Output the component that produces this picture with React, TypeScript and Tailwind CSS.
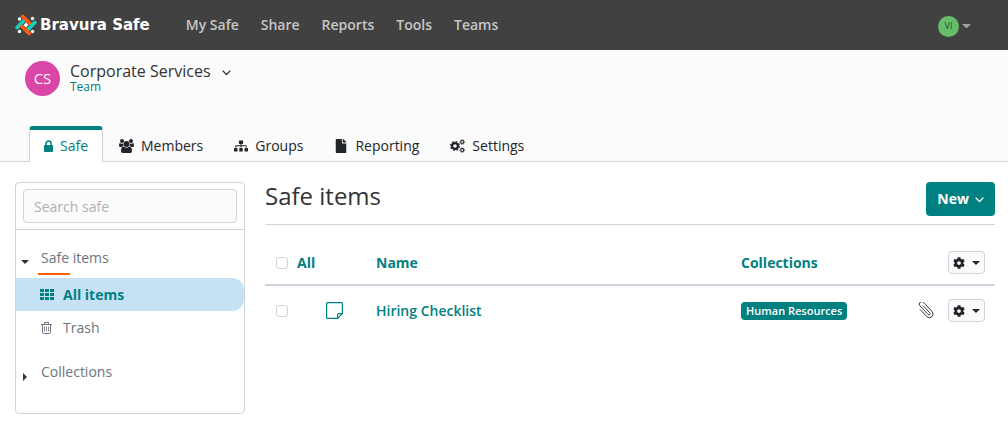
import type { ReactNode } from "react";
import { FaCog, FaFile, FaSitemap } from "react-icons/fa";

// ─── Icons ───────────────────────────────────────────────────────────────────

function Logo() {
  return (
    <svg viewBox="0 0 22 22" width={22} height={22} fill="none" strokeLinecap="round" aria-hidden="true">
      <g fill="#fff">
        <circle cx={4.500} cy={5} r={1.700} />
        <circle cx={17.500} cy={4.500} r={1.700} />
        <circle cx={4.500} cy={17.500} r={1.700} />
        <circle cx={17.500} cy={17.500} r={1.700} />
      </g>
      <g strokeWidth={3.800}>
        <path d="M2.200 13.500L9.500 6" stroke="#16cfc0" />
        <path d="M7.800 2.500l7.200 7" stroke="#fd5a12" />
        <path d="M19.800 8.500L12.500 16" stroke="#16cfc0" />
        <path d="M7 12.500l7.200 7" stroke="#fd5a12" />
      </g>
      <path d="M11 8.500l2.500 2.500-2.500 2.500L8.500 11z" fill="#fff" />
    </svg>
  );
}

function Chevron({ className }: { className?: string }) {
  return (
    <svg
      viewBox="0 0 9 6"
      width={9}
      height={6}
      fill="none"
      stroke="currentColor"
      strokeWidth={1.2}
      strokeLinecap="round"
      strokeLinejoin="round"
      className={className}
      aria-hidden="true"
    >
      <path d="M1 1l3.500 3.500L8 1" />
    </svg>
  );
}

function CaretDown({ width = 8, className }: { width?: number; className?: string }) {
  return (
    <svg viewBox="0 0 8 4" width={width} fill="currentColor" className={className} aria-hidden="true">
      <path d="M0 0h8L4 4z" />
    </svg>
  );
}

function CaretRight({ className }: { className?: string }) {
  return (
    <svg viewBox="0 0 8 8" width={8} height={8} fill="currentColor" className={className} aria-hidden="true">
      <path d="M2 0v8l4-4z" />
    </svg>
  );
}

function LockIcon() {
  return (
    <svg viewBox="0 0 9 12" width={9} height={12} aria-hidden="true">
      <path d="M2 6V3.500a2.500 2.500 0 015 0V6" fill="none" stroke="currentColor" strokeWidth={1.500} />
      <rect y={5} width={9} height={7} rx={0.7} fill="currentColor" />
    </svg>
  );
}

function UsersIcon() {
  return (
    <svg viewBox="0 0 1920 1792" width={15} height={14} fill="currentColor" aria-hidden="true">
      <path d="M593 896q-162 5-265 128H194q-82 0-138-40.500T0 865q0-353 124-353 6 0 43.500 21t97.500 42.500T384 597q67 0 133-23-5 37-5 66 0 139 81 256zm1071 637q0 120-73 189.500t-194 69.500H523q-121 0-194-69.500T256 1533q0-53 3.500-103.500t14-109T300 1212t43-97.500 62-81 85.500-53.500T602 960q10 0 43 21.500t73 48 107 48 135 21.500 135-21.500 107-48 73-48 43-21.500q61 0 111.500 20t85.500 53.500 62 81 43 97.500 26.500 108.500 14 109 3.500 103.500z" />
      <path d="M1920 865q0 78-56 118.500t-138 40.500h-134q-103-123-265-128 81-117 81-256 0-29-5-66 66 23 133 23 59 0 119-21.500t97.500-42.500 43.500-21q124 0 124 353z" />
      <circle cx={384} cy={256} r={256} />
      <circle cx={1536} cy={256} r={256} />
      <circle cx={960} cy={640} r={384} />
    </svg>
  );
}

function CogsIcon() {
  return (
    <svg viewBox="0 0 15 14" width={15} height={14} fill="none" stroke="currentColor" aria-hidden="true">
      <circle cx={5} cy={7} r={2.900} strokeWidth={2.200} />
      <circle cx={5} cy={7} r={4.300} strokeWidth={1.400} strokeDasharray="1.7 1.677" />
      <circle cx={12.200} cy={3} r={1.500} strokeWidth={1.100} />
      <circle cx={12.200} cy={3} r={2.300} strokeWidth={0.900} strokeDasharray="1 .806" />
      <circle cx={12.200} cy={11} r={1.500} strokeWidth={1.100} />
      <circle cx={12.200} cy={11} r={2.300} strokeWidth={0.900} strokeDasharray="1 .806" />
    </svg>
  );
}

function GridIcon() {
  return (
    <svg viewBox="0 0 14 11" width={14} height={11} fill="currentColor" aria-hidden="true">
      <path d="M0 0h4v3H0zM5 0h4v3H5zM10 0h4v3h-4zM0 4h4v3H0zM5 4h4v3H5zM10 4h4v3h-4zM0 8h4v3H0zM5 8h4v3H5zM10 8h4v3h-4z" />
    </svg>
  );
}

function TrashIcon() {
  return (
    <svg viewBox="0 0 11 12" width={11} height={12} fill="none" stroke="currentColor" aria-hidden="true">
      <path d="M0 2.500h11M3.500 2.500v-2h4v2M1.500 2.500v8q0 1 1 1h6q1 0 1-1v-8" />
      <path d="M3.500 4.500v5M5.500 4.500v5M7.500 4.500v5" strokeWidth={0.8} />
    </svg>
  );
}

function NoteIcon() {
  return (
    <svg
      viewBox="0 0 17 17"
      width={17}
      height={17}
      fill="none"
      stroke="currentColor"
      strokeWidth={1.2}
      strokeLinejoin="round"
      aria-hidden="true"
    >
      <path d="M1.500.6h14q.9 0 .9.9v10.200l-4.700 4.700H1.500q-.9 0-.9-.9v-14q0-.9.9-.9zM11.600 16.300v-3.700q0-1 1-1h3.700" />
    </svg>
  );
}

function PaperclipIcon() {
  return (
    <svg viewBox="0 0 16 17" width={16} height={17} fill="none" stroke="currentColor" strokeWidth={0.9} strokeLinecap="round" aria-hidden="true">
      <path
        transform="translate(7.500 8) rotate(-43)"
        d="M1.200-4.500V5a1.200 1.200 0 01-2.400 0V-6.800a2.500 2.500 0 015 0V5.500a3.700 3.700 0 01-7.400 0V-4"
      />
    </svg>
  );
}

// ─── Data ────────────────────────────────────────────────────────────────────

const navLinks = ["My Safe", "Share", "Reports", "Tools", "Teams"];

const tabs: { label: string; icon: ReactNode; active?: boolean }[] = [
  { label: "Safe", icon: <LockIcon />, active: true },
  { label: "Members", icon: <UsersIcon /> },
  { label: "Groups", icon: <FaSitemap size={14} /> },
  { label: "Reporting", icon: <FaFile size={14} /> },
  { label: "Settings", icon: <CogsIcon /> },
];

const items = [{ name: "Hiring Checklist", collection: "Human Resources" }];

// ─── Layout pieces ───────────────────────────────────────────────────────────

function Navbar() {
  return (
    <header className="flex h-[50px] items-center bg-[#414141] pl-[15px] pr-[37px]">
      <a href="#" className="flex items-center gap-[3px] font-['DejaVu_Sans',sans-serif] text-[15px] font-bold text-white">
        <Logo />
        <span>Bravura Safe</span>
      </a>
      <nav className="ml-9 flex gap-[22px] text-sm font-semibold text-[#c6c6c6]">
        {navLinks.map((label) => (
          <a key={label} href="#">
            {label}
          </a>
        ))}
      </nav>
      <button aria-label="Account menu" className="ml-auto mt-0.5 flex items-center gap-[3px] text-[#a0a0a0]">
        <span className="flex size-[21px] items-center justify-center rounded-full bg-[#65bd6b] text-[9px] text-[#27562b]">
          VI
        </span>
        <CaretDown width={9} />
      </button>
    </header>
  );
}

function TeamHeader() {
  return (
    <div className="border-b border-[#ced4dc] bg-[#fbfbfb]">
      <div className="flex h-[76px] gap-2.5 pl-[25px] pt-[11px]">
        <span className="flex size-[35px] items-center justify-center rounded-full bg-[#d946a8] text-[15px] text-white">
          CS
        </span>
        <div>
          <button className="flex items-center gap-[11px] text-base leading-5 text-[#333]">
            Corporate Services
            <Chevron className="mt-1" />
          </button>
          <div className="text-[12px] leading-3 text-[#008080]">Team</div>
        </div>
      </div>
      <nav className="-mb-px flex gap-px pl-[29px]">
        {tabs.map(({ label, icon, active }) => (
          <a
            key={label}
            href="#"
            className={[
              "flex h-9 items-center gap-[7px] rounded-t border-x border-t-4 px-3.5 text-sm font-medium",
              active
                ? "border-x-[#ced4dc] border-t-[#008080] bg-white text-[#008080]"
                : "border-transparent text-[#212529]",
            ].join(" ")}
          >
            {icon}
            {label}
          </a>
        ))}
      </nav>
    </div>
  );
}

function Sidebar() {
  return (
    <aside className="min-h-[232px] w-[230px] shrink-0 rounded border border-[#ced4dc] text-sm text-[#6c757d]">
      <div className="border-b border-[#ced4dc] px-[7px] py-1.5">
        <input
          type="search"
          aria-label="Search safe"
          placeholder="Search safe"
          className="block h-[34px] w-full rounded border border-[#ced4dc] bg-[#fbfbfb] px-2.5 placeholder:text-[#b0b0b0]"
        />
      </div>
      <button className="mt-4 flex h-6 w-full items-center gap-3 pl-[5px]">
        <CaretDown className="mt-2 text-[#333]" />
        Safe items
      </button>
      <div className="ml-[22px] mt-[3px] h-0.5 w-8 bg-[#ff5f00]" />
      <ul className="mt-[3px]">
        <li>
          <a href="#" className="flex h-[33px] items-center gap-[9px] rounded-r-xl bg-[#c7e1f4] pl-6 font-bold text-[#008080]">
            <GridIcon />
            All items
          </a>
        </li>
        <li>
          <a href="#" className="flex h-[33px] items-center gap-[11px] pl-[25px]">
            <TrashIcon />
            Trash
          </a>
        </li>
      </ul>
      <button className="mt-4 flex h-6 w-full items-center gap-3 pl-[5px]">
        <CaretRight className="mt-2.5 text-[#333]" />
        Collections
      </button>
    </aside>
  );
}

function OptionsButton() {
  return (
    <button
      aria-label="Options"
      className="flex h-[23px] w-[37px] items-center justify-center gap-[7px] rounded border border-[#ced4dc] bg-[#fbfbfb] text-[#212529]"
    >
      <FaCog size={12} />
      <CaretDown />
    </button>
  );
}

function Checkbox({ label }: { label: string }) {
  return (
    <input
      type="checkbox"
      aria-label={label}
      className="block size-3 appearance-none rounded-[3px] border border-[#ced4dc] bg-white checked:bg-[#008080]"
    />
  );
}

function ItemsTable() {
  return (
    <table className="mt-4 w-full table-fixed text-left text-sm text-[#008080]">
      <thead>
        <tr className="h-[44px] border-b-2 border-[#ced4dc] font-bold">
          <th className="w-[61px] pl-[11px]">
            <label className="flex items-center gap-[9px]">
              <Checkbox label="Select all items" />
              All
            </label>
          </th>
          <th className="w-[50px]" />
          <th>Name</th>
          <th className="w-[170px]">Collections</th>
          <th className="w-[84px] pr-2.5">
            <div className="flex justify-end">
              <OptionsButton />
            </div>
          </th>
        </tr>
      </thead>
      <tbody>
        {items.map(({ name, collection }) => (
          <tr key={name} className="h-[50px]">
            <td className="pl-[11px]">
              <Checkbox label={`Select ${name}`} />
            </td>
            <td>
              <NoteIcon />
            </td>
            <td className="font-semibold">
              <a href="#">{name}</a>
            </td>
            <td>
              <span className="block w-fit rounded bg-[#008080] px-[5px] text-[11px] font-semibold leading-[18px] text-white">
                {collection}
              </span>
            </td>
            <td className="pr-2.5">
              <div className="flex items-center justify-end gap-3.5 text-[#333]">
                <PaperclipIcon />
                <OptionsButton />
              </div>
            </td>
          </tr>
        ))}
      </tbody>
    </table>
  );
}

// ─── Page ────────────────────────────────────────────────────────────────────

export default function App() {
  return (
    <div className="min-h-screen bg-white font-['Open_Sans',sans-serif]">
      <Navbar />
      <TeamHeader />
      <div className="flex gap-5 pb-4 pl-[15px] pr-[13px] pt-5">
        <Sidebar />
        <main className="min-w-0 flex-1">
          <div className="flex h-[43px] justify-between border-b border-[#ced4dc]">
            <h1 className="text-2xl leading-7 text-[#333]">Safe items</h1>
            <button className="flex h-[34px] items-center gap-1.5 rounded bg-[#008080] px-[11px] text-sm font-bold text-white">
              New
              <Chevron className="mt-px" />
            </button>
          </div>
          <ItemsTable />
        </main>
      </div>
    </div>
  );
}
